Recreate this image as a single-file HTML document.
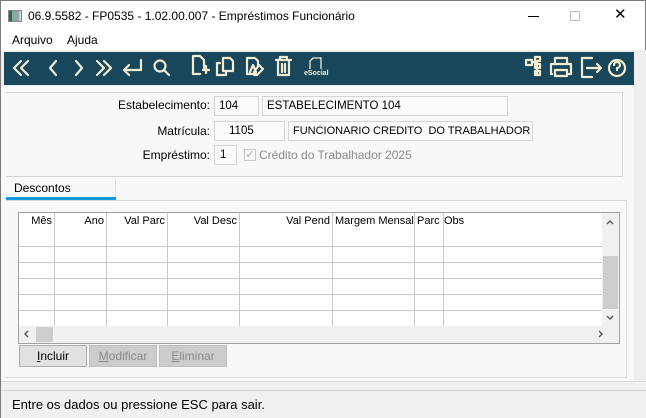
<!DOCTYPE html>
<html><head><meta charset="utf-8"><style>
*{margin:0;padding:0;box-sizing:border-box}
body{width:646px;height:418px;overflow:hidden;background:#fff;font-family:"Liberation Sans",sans-serif;font-size:12px;color:#000;position:relative}
.a{position:absolute;white-space:nowrap}
.lbl{position:absolute;text-align:right;font-size:12px}
.inp{position:absolute;border:1px solid #d5d5d5;background:#fafbfc;height:20px;font-size:11.5px;line-height:18px;padding-left:4px;white-space:nowrap;overflow:hidden}
.vl{position:absolute;width:1px;background:#c8c8c8}
.hl{position:absolute;height:1px;background:#c8c8c8}
.btn{position:absolute;height:22px;border:1px solid #adadad;text-align:center;line-height:20px;font-size:12px}
.hc{position:absolute;top:213px;height:17px;line-height:17px;font-size:11px;white-space:nowrap;padding:0 2px;overflow:hidden}
</style></head><body>
<div class="a" style="left:0;top:0;width:646px;height:418px;border:1px solid #7a7a7a;border-bottom:none"></div>
<!-- title -->
<div class="a" style="left:8px;top:10px;width:14px;height:12px;background:linear-gradient(90deg,#2f6f3a 0 3px,#8aa 3px 10px,#ccc 10px);border:1px solid #888"></div>
<div class="a" style="left:28px;top:9px;font-size:12px">06.9.5582 - FP0535 - 1.02.00.007 - Empréstimos Funcionário</div>
<div class="a" style="left:528px;top:16px;width:11px;height:1px;background:#000"></div>
<div class="a" style="left:570px;top:11px;width:10px;height:10px;border:1px solid #bbb"></div>
<div class="a" style="left:614px;top:7px;font-size:15px;line-height:16px">✕</div>
<!-- menu -->
<div class="a" style="left:12px;top:33px">Arquivo</div>
<div class="a" style="left:67px;top:33px">Ajuda</div>
<!-- toolbar -->
<div class="a" style="left:1px;top:50px;width:645px;height:36px;background:#eeeeee"></div>
<div class="a" style="left:4px;top:52px;width:630px;height:33px;background:#18475b"></div>
<svg class="a" style="left:4px;top:52px" width="630" height="33" fill="none" stroke="#f3ecd0" stroke-width="2.2" stroke-linecap="round" stroke-linejoin="round">
<path d="M17 9l-7 7 7 7M24 9l-7 7 7 7"/>
<path d="M52 9l-6 7 6 7"/>
<path d="M72 9l6 7-6 7"/>
<path d="M93 9l7 7-7 7M100 9l7 7-7 7"/>
<path d="M137 8v10h-17M125 13l-5 5 5 5"/>
<circle cx="156" cy="14" r="5.5"/><path d="M160 18l5 5"/>
<path d="M200 17v-9l-4-4h-7v18h7M202 14v7M199 18h6"/>
<path d="M216 11h-3v12h9v-4M219 6h7l3 3v10h-10z"/>
<path d="M252 22h-9V6h8l3 3v4M246 20l3-7 3 7M255 13l4 4-6 6h-3v-3z"/>
<path d="M272 8h15M276 8V5h7v3M274 10v13h11V10M278 12v8M281 12v8"/>
<path d="M522 8h6v5h-6zM531 5h5v4h-5zM531 12h5v4h-5zM531 19h5v4h-5zM528 10h3M533 9v14"/>
<path d="M551 12V6h12v6M548 22h-1V12h20v10h-3M551 18h12v6h-12z"/>
<path d="M588 6h-10v19h10M583 16h14M593 12l4 4-4 4"/>
<circle cx="613" cy="16" r="8"/><path d="M610 13a3 3 0 1 1 3 3v2"/>
</svg>
<svg class="a" style="left:304px;top:57px" width="24" height="22" fill="none" stroke="#f3ecd0" stroke-width="1.3"><path d="M6 12V4l3-3h8v11"/></svg>
<div class="a" style="left:304px;top:70px;font-size:7px;color:#f3ecd0;font-weight:bold">eSocial</div>
<!-- content -->
<div class="a" style="left:1px;top:86px;width:633px;height:304px;background:#f7f8fa"></div>
<div class="a" style="left:634px;top:86px;width:12px;height:304px;background:#eeeeee"></div>
<div class="a" style="left:6px;top:92px;width:617px;height:85px;border-top:1px solid #d5d5d5;border-bottom:1px solid #d5d5d5;border-right:1px solid #d5d5d5"></div>
<div class="lbl" style="left:100px;width:110px;top:98px">Estabelecimento:</div>
<div class="inp" style="left:214px;top:96px;width:45px">104</div>
<div class="inp" style="left:262px;top:96px;width:246px">ESTABELECIMENTO 104</div>
<div class="lbl" style="left:100px;width:110px;top:124px">Matrícula:</div>
<div class="inp" style="left:214px;top:121px;width:71px;padding-left:14px">1105</div>
<div class="inp" style="left:288px;top:121px;width:245px;font-size:11px">FUNCIONARIO CREDITO&nbsp; DO TRABALHADOR</div>
<div class="lbl" style="left:100px;width:110px;top:148px">Empréstimo:</div>
<div class="inp" style="left:214px;top:145px;width:23px;padding-left:5px">1</div>
<div class="a" style="left:244px;top:149px;width:12px;height:12px;border:1px solid #c8c8c8;color:#aaa;font-size:11px;line-height:10px;text-align:center">✓</div>
<div class="a" style="left:259px;top:148px;color:#8a8a8a">Crédito do Trabalhador 2025</div>
<!-- tab -->
<div class="a" style="left:14px;top:181px">Descontos</div>
<div class="a" style="left:115px;top:180px;width:1px;height:16px;background:#ddd"></div>
<div class="a" style="left:6px;top:197px;width:110px;height:3px;background:#0b9be0"></div>
<div class="a" style="left:6px;top:200px;width:621px;height:178px;border-top:1px solid #d8d8d8;border-right:1px solid #d8d8d8;border-bottom:1px solid #d8d8d8"></div>
<!-- grid -->
<div class="a" style="left:18px;top:212px;width:602px;height:132px;border:1px solid #a0a0a0;background:#fff"></div>
<div class="hc" style="left:19px;width:35px;text-align:right">Mês</div>
<div class="hc" style="left:55px;width:51px;text-align:right">Ano</div>
<div class="hc" style="left:107px;width:60px;text-align:right">Val Parc</div>
<div class="hc" style="left:168px;width:71px;text-align:right">Val Desc</div>
<div class="hc" style="left:240px;width:92px;text-align:right">Val Pend</div>
<div class="hc" style="left:333px;width:81px">Margem Mensal</div>
<div class="hc" style="left:415px;width:28px">Parc</div>
<div class="hc" style="left:442px;width:40px">Obs</div>
<div class="vl" style="left:54px;top:213px;height:113px"></div>
<div class="vl" style="left:106px;top:213px;height:113px"></div>
<div class="vl" style="left:167px;top:213px;height:113px"></div>
<div class="vl" style="left:239px;top:213px;height:113px"></div>
<div class="vl" style="left:332px;top:213px;height:113px"></div>
<div class="vl" style="left:414px;top:213px;height:113px"></div>
<div class="vl" style="left:443px;top:213px;height:113px"></div>
<div class="hl" style="left:19px;top:246px;width:583px"></div>
<div class="hl" style="left:19px;top:262px;width:583px"></div>
<div class="hl" style="left:19px;top:278px;width:583px"></div>
<div class="hl" style="left:19px;top:294px;width:583px"></div>
<div class="hl" style="left:19px;top:310px;width:583px"></div>
<div class="a" style="left:602px;top:213px;width:17px;height:113px;background:#f0f0f0"></div>
<div class="a" style="left:603px;top:256px;width:15px;height:53px;background:#cdcdcd"></div>
<div class="a" style="left:19px;top:326px;width:600px;height:17px;background:#f0f0f0"></div>
<div class="a" style="left:36px;top:327px;width:17px;height:15px;background:#cdcdcd"></div>
<svg class="a" style="left:19px;top:213px" width="600" height="130" fill="none" stroke="#555" stroke-width="1.4">
<path d="M588 11l3-3 3 3M588 103l3 3 3-3M9 118l-3 3 3 3M580 118l3 3-3 3"/>
</svg>
<!-- buttons -->
<div class="btn" style="left:19px;top:345px;width:68px;background:#e1e1e1"><u>I</u>ncluir</div>
<div class="btn" style="left:89px;top:345px;width:68px;background:#cccccc;border-color:#bfbfbf;color:#8a8a8a"><u>M</u>odificar</div>
<div class="btn" style="left:159px;top:345px;width:68px;background:#cccccc;border-color:#bfbfbf;color:#8a8a8a"><u>E</u>liminar</div>
<!-- status -->
<div class="a" style="left:1px;top:381px;width:645px;height:9px;background:#f0f0f0;border-top:1px solid #dcdcdc"></div>
<div class="a" style="left:1px;top:390px;width:645px;height:28px;background:#f0f0f0;border-top:1px solid #d5d5d5"></div>
<div class="a" style="left:12px;top:397px;font-size:13px">Entre os dados ou pressione ESC para sair.</div>
</body></html>
